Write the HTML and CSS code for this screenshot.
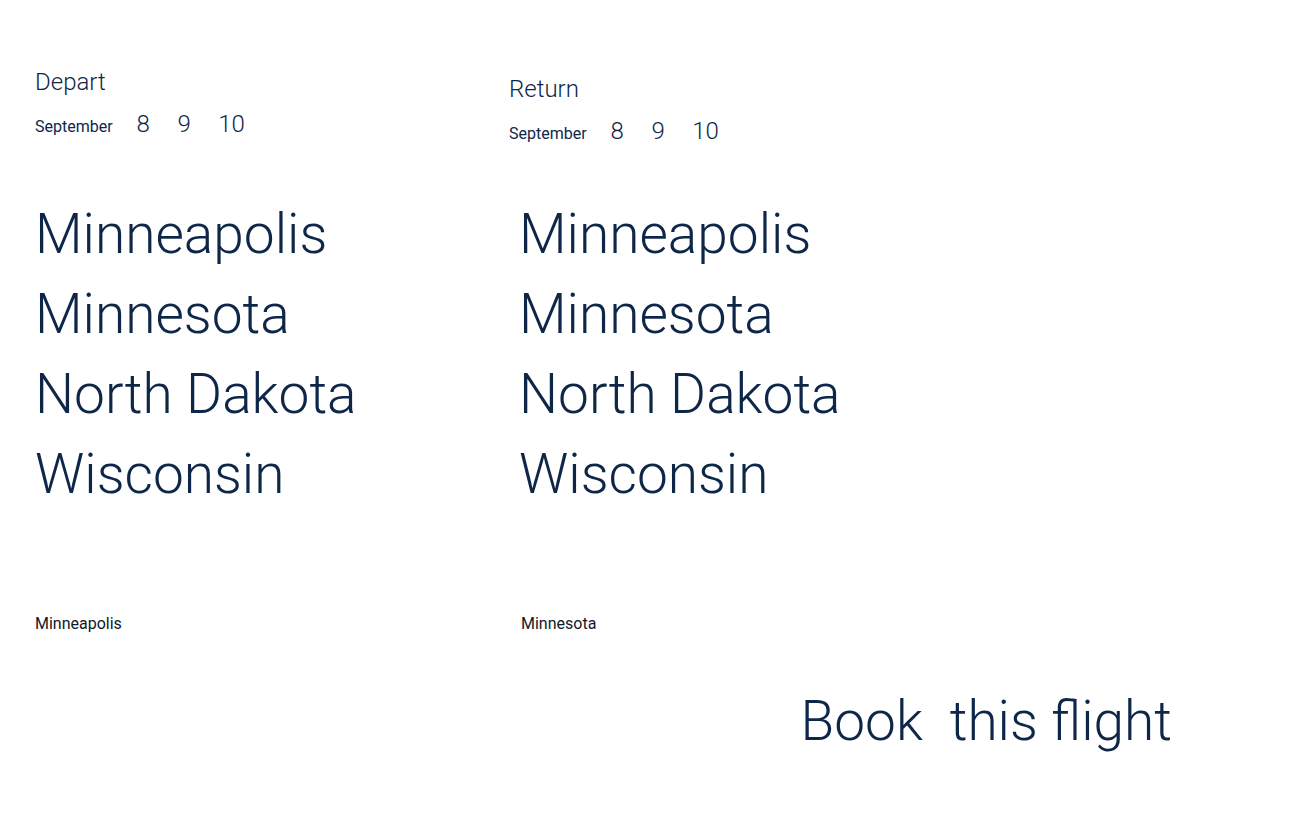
FILE: index.html
```html
<!DOCTYPE html>
<html lang="en">
<head>
<meta charset="utf-8">
<title>Book a flight</title>
<link rel="stylesheet" href="styles.css">
</head>
<body>
<main class="page">
  <section class="cols">
    <div class="col">
      <div class="trip">
        <h2 class="trip-label">Depart</h2>
        <div class="dates">
          <span class="month">September</span>
          <span class="day">8</span>
          <span class="day">9</span>
          <span class="day">10</span>
        </div>
      </div>
      <ul class="cities">
        <li>Minneapolis</li>
        <li>Minnesota</li>
        <li>North Dakota</li>
        <li>Wisconsin</li>
      </ul>
      <p class="selected">Minneapolis</p>
    </div>
    <div class="col col-return">
      <div class="trip">
        <h2 class="trip-label">Return</h2>
        <div class="dates">
          <span class="month">September</span>
          <span class="day">8</span>
          <span class="day">9</span>
          <span class="day">10</span>
        </div>
      </div>
      <ul class="cities">
        <li>Minneapolis</li>
        <li>Minnesota</li>
        <li>North Dakota</li>
        <li>Wisconsin</li>
      </ul>
      <p class="selected">Minnesota</p>
    </div>
  </section>
  <div class="book-row">
    <button class="book" type="button">Book&nbsp; this flight</button>
  </div>
</main>
</body>
</html>
```

FILE: styles.css
```css
* { box-sizing: border-box; }
html, body {
  margin: 0;
  padding: 0;
  background: #ffffff;
}
body {
  font-family: Roboto, "Liberation Sans", sans-serif;
  color: #0e2748;
}
.page {
  padding: 65px 35px 0 35px;
}
.cols {
  display: flex;
}
.col {
  width: 474px;
  display: flex;
  flex-direction: column;
}
.trip {
  height: 82px;
}
.col-return .trip {
  padding-top: 7px;
}
.col-return .cities {
  padding-left: 10px;
}
.col-return .selected {
  padding-left: 12px;
}
.trip-label {
  margin: 0;
  font-size: 24px;
  font-weight: 300;
  line-height: 34px;
}
.dates {
  display: flex;
  align-items: baseline;
  margin-top: 11px;
  height: 30px;
}
.month {
  font-size: 16px;
  font-weight: 400;
  margin-right: 24px;
}
.day {
  font-size: 24px;
  font-weight: 300;
  margin-right: 27.5px;
}
.cities {
  list-style: none;
  margin: 47px 0 0 0;
  padding: 0;
}
.cities li {
  font-size: 55px;
  font-weight: 300;
  line-height: 80px;
}
.selected {
  margin: 100px 0 0 0;
  font-size: 16px;
  font-weight: 400;
  line-height: 20px;
  color: #111827;
}
.book-row {
  display: flex;
  justify-content: flex-end;
  padding-right: 93px;
  margin-top: 54px;
}
.book {
  border: 0;
  background: none;
  padding: 0;
  font-family: inherit;
  font-size: 55px;
  font-weight: 300;
  line-height: 66px;
  color: #0e2748;
  cursor: pointer;
}
```
